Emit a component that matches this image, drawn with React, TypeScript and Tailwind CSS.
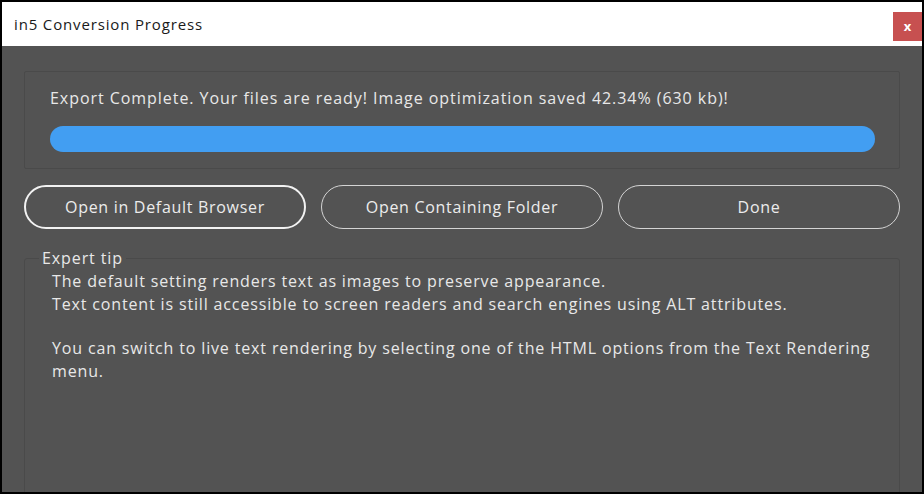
import React from 'react';

const font = { fontFamily: '"Open Sans", "Noto Sans", sans-serif' };

const App: React.FC = () => {
  const buttons = ['Open in Default Browser', 'Open Containing Folder', 'Done'];

  return (
    <div className="w-[924px] h-[494px] bg-black p-[2px] flex flex-col" style={font}>
      {/* title bar */}
      <div className="h-[44px] bg-white flex items-start justify-between shrink-0">
        <div className="pl-[12px] pt-[12px] text-[15px] leading-[20px] tracking-[0.85px] text-[#1a1a1a]">
          in5 Conversion Progress
        </div>
        <button className="mt-[10px] w-[29px] h-[29px] bg-[#c75050] text-white flex items-center justify-center text-[13px] font-bold leading-none">
          x
        </button>
      </div>

      {/* body */}
      <div className="flex-1 bg-[#535353] overflow-hidden px-[22px] pt-[25px]">
        <div className="h-[98px] border border-[#4a4a4a] rounded-[2px] pl-[25px] pr-[24px] pt-[16px]">
          <div className="text-[16px] leading-[20px] tracking-[0.95px] text-[#e8e8e8] whitespace-nowrap">
            Export Complete. Your files are ready! Image optimization saved 42.34% (630 kb)!
          </div>
          <div className="mt-[18px] h-[26px] rounded-full bg-[#429ef2]" />
        </div>

        <div className="mt-[16px] grid grid-cols-3 gap-[15px]">
          {buttons.map((label, i) => (
            <button
              key={label}
              className={`h-[44px] rounded-full text-[16px] tracking-[0.7px] text-[#ececec] ${
                i === 0 ? 'border-2 border-[#f2f2f2]' : 'border-[1.5px] border-[#d4d4d4]'
              }`}
            >
              {label}
            </button>
          ))}
        </div>

        <fieldset className="mt-[20px] h-[300px] border border-[#4a4a4a] rounded-[3px]">
          <legend className="ml-[14px] px-[3px] text-[16px] leading-[18px] tracking-[0.9px] text-[#e8e8e8]">
            Expert tip
          </legend>
          <div className="pl-[27px] pr-[14px] pt-[3px] text-[16px] leading-[23px] tracking-[0.85px] text-[#e8e8e8]">
            <p>The default setting renders text as images to preserve appearance.</p>
            <p>Text content is still accessible to screen readers and search engines using ALT attributes.</p>
            <p className="mt-[21px]">
              You can switch to live text rendering by selecting one of the HTML options from the Text Rendering menu.
            </p>
          </div>
        </fieldset>
      </div>
    </div>
  );
};

export default App;
